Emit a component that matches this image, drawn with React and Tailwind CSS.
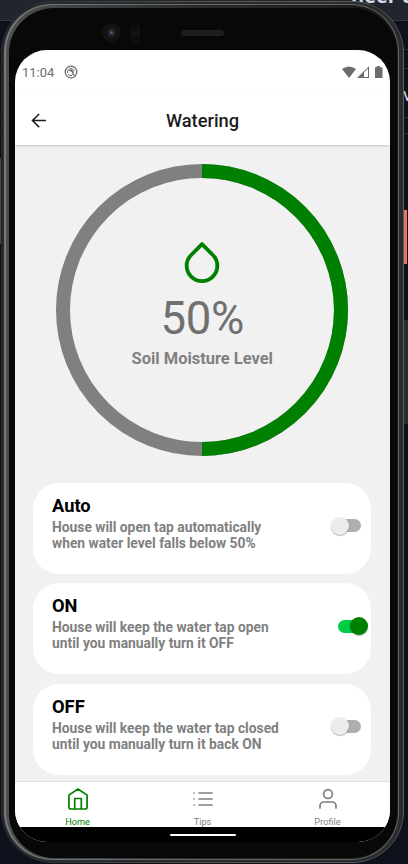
import React from "react";

function StatusBar() {
  return (
    <div className="flex h-[46px] shrink-0 items-center pb-px pl-[7px] pr-[7px] text-[#6c6c6c]">
      <span className="w-[33px] whitespace-nowrap text-[13px] leading-none">11:04</span>
      <svg className="-mt-px ml-[9px]" width="14" height="14" viewBox="0 0 14 14" fill="none" stroke="currentColor">
        <circle cx="7" cy="7" r="5.8" strokeWidth="1.3" />
        <path d="M3.5 8A3.6 3.6 0 0 1 10.3 5.7M4 9.2A3.6 3.6 0 0 0 8 10.5" strokeWidth="1" />
        <path d="M4.8 5.4Q7.8 3.3 9.4 6.2L9.6 8.6 11 11.6 8.4 9.2 8.2 7.2 6.6 6.2Z" fill="currentColor" strokeWidth=".4" />
      </svg>
      <svg className="-mt-px ml-auto" width="41" height="13" viewBox="0 0 41 13" fill="currentColor">
        <path d="M0 3Q7-2.1 14 3L7 12Z" />
        <path d="M15 12 27 .3V12ZM22 6.6V11h4V2.6Z" fillRule="evenodd" />
        <path d="M34.8 0h3v1.3h2a.7.7 0 0 1 .7.7v9.5a.6.6 0 0 1-.6.6h-6.3a.6.6 0 0 1-.6-.6V2a.7.7 0 0 1 .7-.7h1.1Z" />
      </svg>
    </div>
  );
}

function Header() {
  return (
    <div className="z-10 grid h-[49px] shrink-0 grid-cols-[1fr_auto_1fr] items-center bg-white shadow-[0_1px_2px_rgba(0,0,0,0.18)]">
      <svg className="ml-[16px]" width="16" height="16" viewBox="0 0 16 16" fill="none" stroke="#1c1c1e" strokeWidth="1.6">
        <path d="M8.2 1 1.5 7.5l6.7 6.7M1.5 7.5H15" />
      </svg>
      <h1 className="pt-[2px] text-[18.3px] font-medium leading-none text-[#1c1c1e]">Watering</h1>
      <span />
    </div>
  );
}

function Gauge() {
  return (
    <div className="mr-[0.5px] mt-[18.5px] grid h-[292px] w-[292px] shrink-0 place-items-center self-center">
      <svg className="col-start-1 row-start-1" width="292" height="292" viewBox="0 0 292 292" fill="none" strokeWidth="14">
        <circle cx="146" cy="146" r="139" stroke="#808080" />
        <path d="M146 7a139 139 0 0 1 0 278" stroke="#008000" />
      </svg>
      <div className="col-start-1 row-start-1 flex flex-col items-center pb-[12px]">
        <svg width="46" height="46" viewBox="0 0 24 24" fill="none" stroke="#008000" strokeWidth="2" strokeLinecap="round" strokeLinejoin="round">
          <path d="M12 2.69l5.66 5.66a8 8 0 1 1-11.31 0z" />
        </svg>
        <span className="mt-[6.5px] text-[45.5px] font-normal leading-[54px] tracking-[-0.3px] text-[#707070]">50%</span>
        <span className="mt-[3px] text-[16.45px] font-bold leading-[19px] text-[#808080]">Soil Moisture Level</span>
      </div>
    </div>
  );
}

function Toggle({ on }) {
  return on ? (
    <div className="ml-auto mr-[3px] mt-[33px] flex h-[20px] w-[30px] items-center">
      <div className="h-[13px] w-[21px] rounded-l-full bg-[#00cd43]" />
      <div className="-ml-[9px] h-[18px] w-[18px] shrink-0 rounded-full bg-[#008000] shadow-[0_1px_1px_rgba(0,0,0,0.3)]" />
    </div>
  ) : (
    <div className="ml-auto mr-[9px] mt-[32.5px] flex h-[20px] w-[31px] items-center">
      <div className="z-10 h-[18px] w-[18px] shrink-0 rounded-full bg-[#ececec] shadow-[0_1px_1px_rgba(0,0,0,0.3)]" />
      <div className="-ml-[9px] h-[13px] w-[21px] rounded-r-full bg-[#afafaf]" />
    </div>
  );
}

function Card({ title, lines, on }) {
  return (
    <div className="flex h-[91px] shrink-0 items-start rounded-[26px] bg-white pl-[19px]">
      <div className="pt-[12px]">
        <h2 className="text-[18.3px] font-bold leading-[22px] text-black">{title}</h2>
        <p className="mt-[2px] whitespace-nowrap text-[13.82px] font-bold leading-[16px] text-[#808080]">
          {lines[0]}
          <br />
          {lines[1]}
        </p>
      </div>
      <Toggle on={on} />
    </div>
  );
}

function Tab({ label, active, children }) {
  return (
    <div className={active ? "flex w-[125px] flex-col items-center text-[#008000]" : "flex w-[125px] flex-col items-center text-[#808080]"}>
      <svg className="mt-[5px]" width="24" height="24" viewBox="0 0 24 24" fill="none" stroke="currentColor" strokeWidth="1.7" strokeLinecap="round" strokeLinejoin="round">
        {children}
      </svg>
      <span className="mt-[5px] text-[9.2px] leading-[11px]">{label}</span>
    </div>
  );
}

export default function App() {
  return (
    <div className="relative h-[864px] w-[408px] overflow-hidden bg-[#0c111b] font-[Roboto,sans-serif]">
      <div className="flex h-[21px] justify-end overflow-hidden border-b border-[#343a43] bg-[#20252e]">
        <span className="-mt-[17px] w-[57px] whitespace-nowrap font-['Open_Sans',sans-serif] text-[20px] font-bold leading-[26px] text-[#d2d9e2]">neer c</span>
      </div>
      <div className="mt-[28px] h-[20px] border-y border-[#292f38]" />
      <div className="h-[48px] pl-[403px] pt-[14px] text-[18px] leading-[24px] text-[#d2d9e2]">v</div>
      <div className="h-[17px] border-y border-[#292f38]" />

      <div className="absolute left-0 top-[158px] h-[86px] w-[3px] bg-[#444748]" />
      <div className="absolute left-[403px] top-[210px] h-[54px] w-[4px] bg-[#e87562]" />
      <div className="absolute left-[403px] top-[319px] h-[106px] w-[5px] border-y border-[#111] bg-[#282a2b]" />

      <div className="absolute left-[1px] top-px h-[862px] w-[403px] rounded-[52px] bg-gradient-to-r from-[#252627] via-[#555] to-[#5a5c5d] py-px pl-[2px] pr-px">
        <div className="h-full rounded-[50px] bg-[#292c2d] py-[2px] pl-px pr-[4px]">
          <div className="h-full rounded-[48px] bg-gradient-to-r from-[#77797d] via-[#666] to-[#656666] py-px pl-[2px] pr-px">
            <div className="h-full rounded-[47px] bg-gradient-to-r from-[#4c4e50] via-[#292929] to-[#191919] pb-px pl-[3px] pr-px pt-[3px]">
              <div className="flex h-full flex-col rounded-[45px] bg-[#080809] pl-[6px]">
                <div className="flex h-[42px] shrink-0 items-center pl-[87px] pt-[7px]">
                  <div className="grid h-[19px] w-[19px] place-items-center rounded-full bg-[#121213]">
                    <div className="grid h-[9px] w-[9px] place-items-center rounded-full bg-[#222228]">
                      <div className="h-[3px] w-[3px] rounded-full bg-[#555985]" />
                    </div>
                  </div>
                  <div className="ml-[10px] flex h-[20px] w-[9px] flex-col justify-between rounded-full bg-[#131314] p-px">
                    <div className="h-[7px] w-[7px] rounded-full bg-[#0c0c0d]" />
                    <div className="h-[7px] w-[7px] rounded-full bg-[#0c0c0d]" />
                  </div>
                  <div className="ml-[41px] h-[6px] w-[43px] rounded-full border border-[#222] bg-[#1c1c1d]" />
                </div>

                <main className="flex h-[792px] w-[375px] shrink-0 flex-col overflow-hidden rounded-[32px] bg-white">
                  <StatusBar />
                  <Header />
                  <section className="flex h-[636px] shrink-0 flex-col overflow-hidden bg-[#f1f1f1]">
                    <Gauge />
                    <div className="mt-[27.5px] flex flex-col gap-[9.4px] pl-[18px] pr-[19px]">
                      <Card title="Auto" lines={["House will open tap automatically", "when water level falls below 50%"]} />
                      <Card title="ON" on lines={["House will keep the water tap open", "until you manually turn it OFF"]} />
                      <Card title="OFF" lines={["House will keep the water tap closed", "until you manually turn it back ON"]} />
                    </div>
                  </section>
                  <nav className="flex h-[46px] shrink-0 border-t border-[#dedede] bg-white">
                    <Tab label="Home" active>
                      <path d="M2.9 8.1 12 2l9.1 6.1V20a2 2 0 0 1-2 2H4.9a2 2 0 0 1-2-2ZM8.7 22V11.5h6.6V22" />
                    </Tab>
                    <Tab label="Tips">
                      <path d="M8 6h13M8 12h13M8 18h13M3 6h.01M3 12h.01M3 18h.01" />
                    </Tab>
                    <Tab label="Profile">
                      <circle cx="12" cy="7" r="4.4" />
                      <path d="M4 21v-2a4 4 0 0 1 4-4h8a4 4 0 0 1 4 4v2" />
                    </Tab>
                  </nav>
                  <div className="flex h-[15px] shrink-0 items-start justify-center bg-black pt-[7px]">
                    <div className="h-[2px] w-[66px] rounded-full bg-white" />
                  </div>
                </main>
              </div>
            </div>
          </div>
        </div>
      </div>
    </div>
  );
}
